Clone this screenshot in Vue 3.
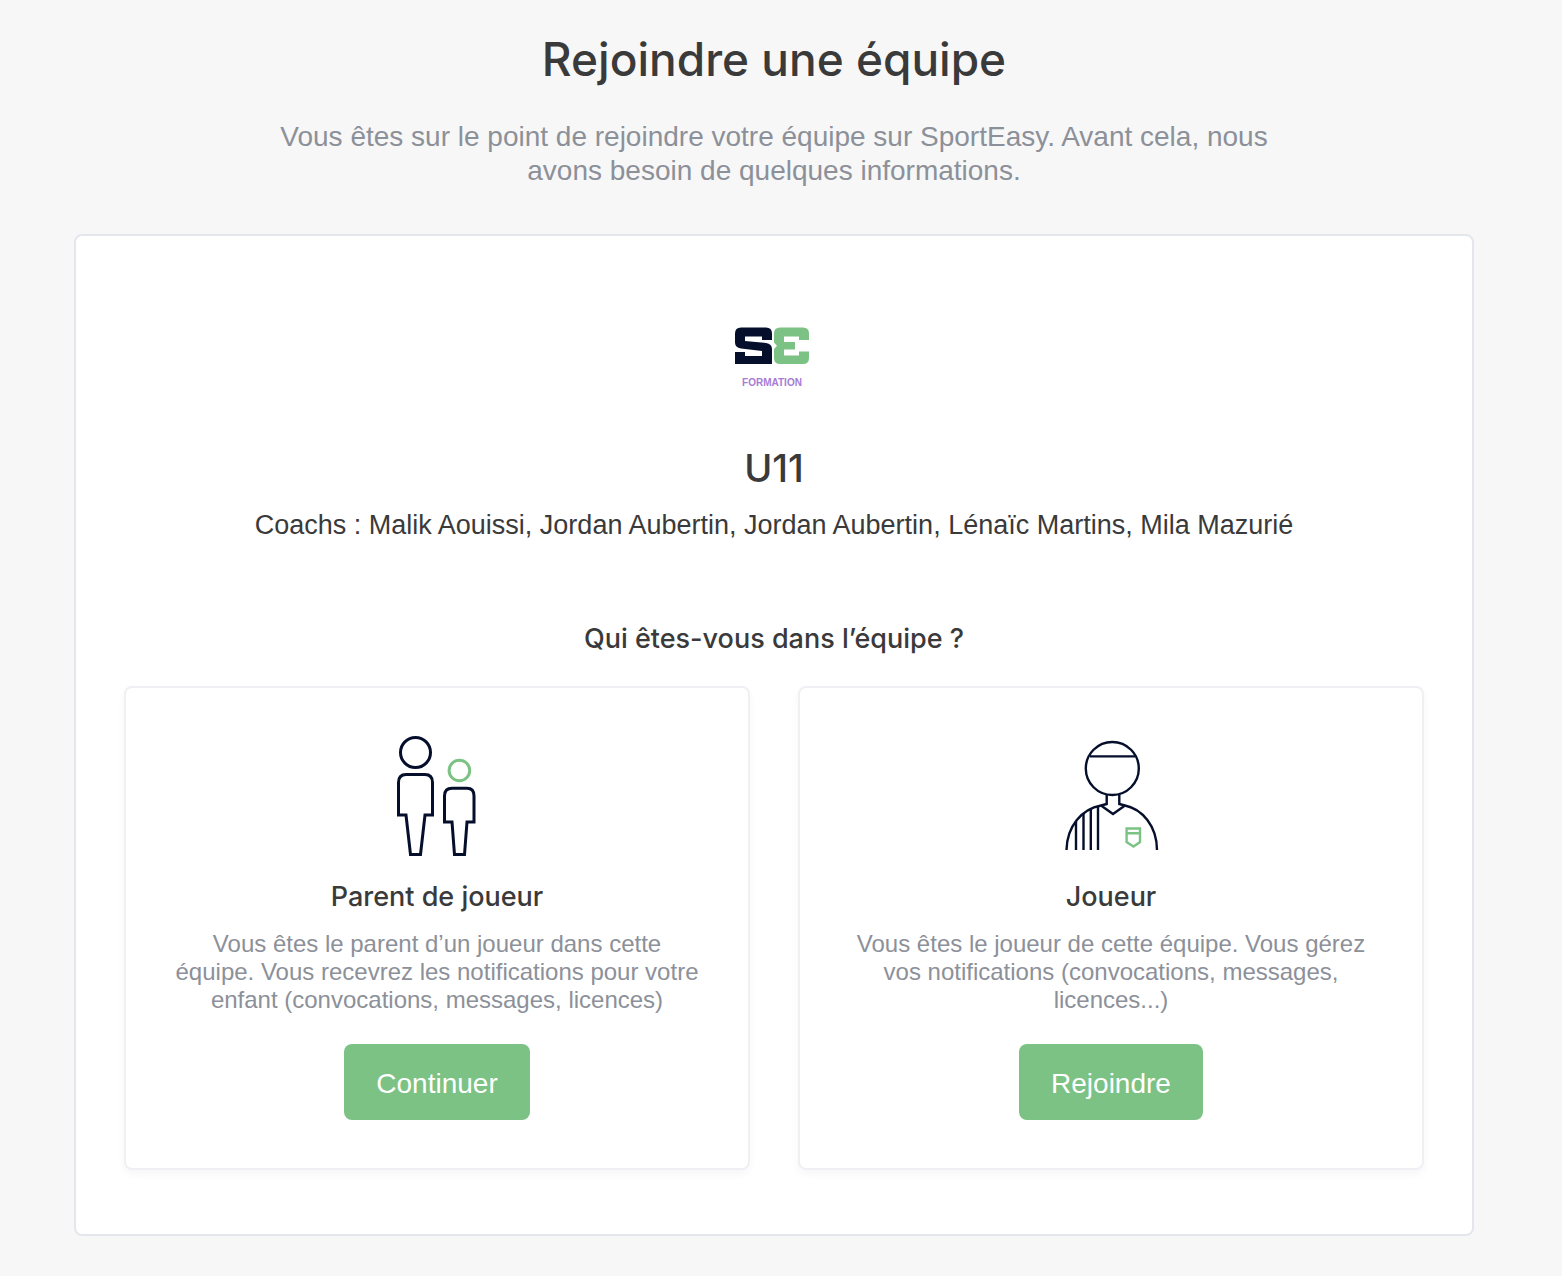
<script setup>
const coaches = ['Malik Aouissi', 'Jordan Aubertin', 'Jordan Aubertin', 'Lénaïc Martins', 'Mila Mazurié']

const roles = [
  {
    id: 'parent',
    title: 'Parent de joueur',
    text: 'Vous êtes le parent d’un joueur dans cette équipe. Vous recevrez les notifications pour votre enfant (convocations, messages, licences)',
    action: 'Continuer',
  },
  {
    id: 'player',
    title: 'Joueur',
    text: 'Vous êtes le joueur de cette équipe. Vous gérez vos notifications (convocations, messages, licences...)',
    action: 'Rejoindre',
  },
]
</script>

<template>
  <main class="page">
    <header class="intro">
      <h1>Rejoindre une équipe</h1>
      <p>Vous êtes sur le point de rejoindre votre équipe sur SportEasy. Avant cela, nous avons besoin de quelques informations.</p>
    </header>

    <section class="panel">
      <div class="logo">
        <svg width="76" height="38" viewBox="0 0 76 38" aria-hidden="true">
          <path fill="#050f2c" d="M7 .5H32Q38 .5 38 6.500V13H28V9.500H11V14L32 16Q38 17 38 22V37H1V25H11V29H28V24L7 21.500Q1 20.500 1 15.500V6.500Q1 .5 7 .5Z" />
          <path fill="#7cc284" d="M46 .5H69Q75 .5 75 6.500V13H65V9.500H50V15H61V22.500H50V28.500H65V24.500H75V31Q75 37 69 37H46Q40 37 40 31V22L43 18.700L40 15.500V6.500Q40 .5 46 .5Z" />
        </svg>
        <span>FORMATION</span>
      </div>

      <h2>U11</h2>
      <p class="coaches">Coachs : {{ coaches.join(', ') }}</p>

      <h3>Qui êtes-vous dans l’équipe ?</h3>
      <div class="roles">
        <article v-for="role in roles" :key="role.id" class="role">
          <svg v-if="role.id === 'parent'" class="icon" viewBox="0 0 120 120" fill="none" stroke="#050f2c" stroke-width="3" aria-hidden="true">
            <circle cx="38.500" cy="16.500" r="15" />
            <path d="M29 38.500H48Q55.500 38.500 55.500 46.500V79H48L43.500 118.500H33.500L29 79H21.500V46.500Q21.500 38.500 29 38.500Z" />
            <circle cx="82.400" cy="34.500" r="10.300" stroke="#7cc284" />
            <path d="M75 52.300H90Q97 52.300 97 60V86H90L87.500 118.500H77.500L75 86H67.500V60Q67.500 52.300 75 52.300Z" />
          </svg>
          <svg v-else class="icon" viewBox="0 0 120 120" fill="none" stroke="#050f2c" stroke-width="2.400" aria-hidden="true">
            <circle cx="61.300" cy="32.500" r="26.500" />
            <path d="M39 20.400H84M55.700 58V68L50 69.500M68.300 58V68L74 69.500M50 69.500L62 78L74 69.500" />
            <path d="M15.500 114C16 90 31 73 50 69.500M74 69.500C91 73 106 90 106 114" />
            <path d="M25 85V114M32.500 77V114M39.800 73V114M47 70V114" />
            <path stroke="#7cc284" d="M75.600 92.500H89V106L82.500 110.500L75.600 106ZM75.600 97.300H89" />
          </svg>
          <h4>{{ role.title }}</h4>
          <p>{{ role.text }}</p>
          <button type="button">{{ role.action }}</button>
        </article>
      </div>
    </section>
  </main>
</template>

<style>
body {
  margin: 0;
  background: #f7f7f7;
}
</style>

<style scoped>
.page {
  box-sizing: border-box;
  padding: 31px 88px 40px 74px;
  background: #f7f7f7;
  color: #3a3a3a;
  font-family: "Liberation Sans", Arial, sans-serif;
  font-size: 28px;
  line-height: 34px;
  text-align: center;
}

h1,
h2,
h3,
h4,
p {
  margin: 0;
}

h1,
h2,
h3,
h4 {
  font-family: Inter, sans-serif;
  font-weight: 500;
}

.intro p {
  max-width: 1000px;
  margin: 33px auto 46px;
  color: #8c9099;
}

h1 {
  font-size: 46px;
  line-height: 56px;
}

.panel {
  padding: 91px 48px 64px;
  border: 2px solid #e3e7ec;
  border-radius: 8px;
  background: #fff;
}

.logo {
  display: flex;
  flex-direction: column;
  align-items: center;
  gap: 12px;
  margin-right: 4px;
}

.logo svg {
  display: block;
}

.logo span {
  color: #a77bd6;
  font: bold 10px/12px "Liberation Sans", Arial, sans-serif;
}

h2 {
  margin-top: 55px;
  font-size: 38px;
  line-height: 48px;
}

.coaches {
  margin-top: 16px;
  font-size: 27px;
}

h3 {
  margin: 80px 0 30px;
  font-size: 27px;
}

.roles {
  display: grid;
  grid-template-columns: 1fr 1fr;
  gap: 48px;
}

.role {
  display: flex;
  flex-direction: column;
  align-items: center;
  padding: 48px;
  border: 2px solid #efeff4;
  border-radius: 8px;
  box-shadow: 0 4px 8px rgba(30, 30, 60, 0.04);
}

.icon {
  width: 120px;
  height: 120px;
}

h4 {
  margin: 24px 0 16px;
  font-size: 27px;
}

.role p {
  color: #8c9099;
  font-size: 24px;
  line-height: 28px;
}

button {
  height: 76px;
  margin-top: 30px;
  padding: 4px 32px 0;
  border: 0;
  border-radius: 8px;
  background: #7cc284;
  color: #fff;
  font: inherit;
}
</style>
